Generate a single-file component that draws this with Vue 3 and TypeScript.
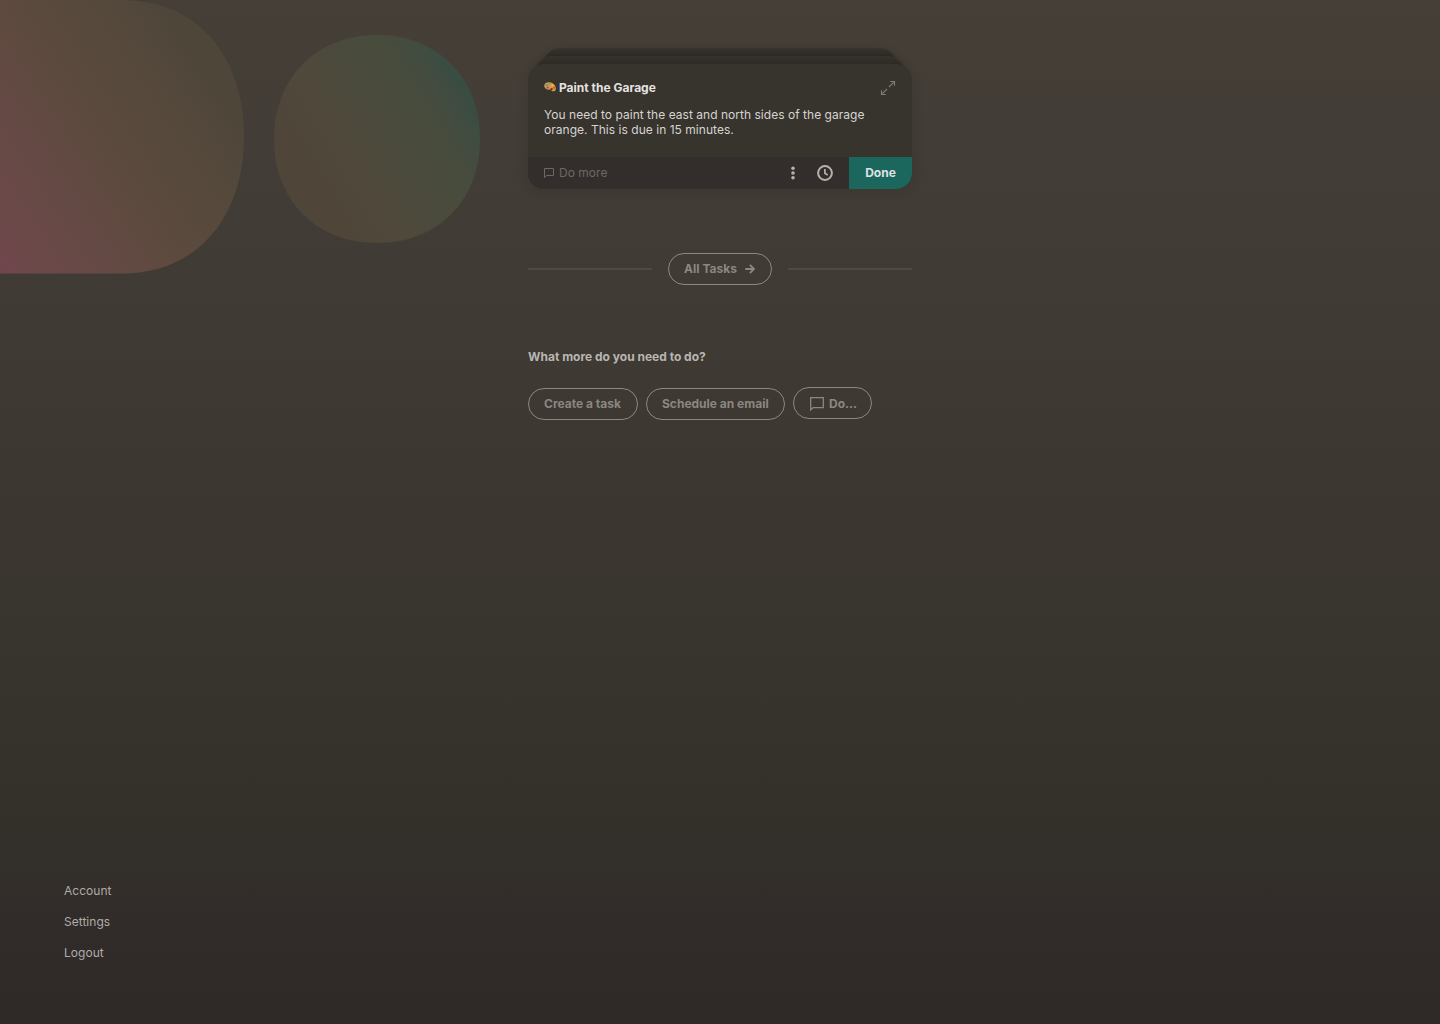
<script setup lang="ts">
interface Task {
  title: string
  body: string
}

const task: Task = {
  title: 'Paint the Garage',
  body: 'You need to paint the east and north sides of the garage orange. This is due in 15 minutes.',
}
const links: string[] = ['Account', 'Settings', 'Logout']
const suggestions: string[] = ['Create a task', 'Schedule an email']
</script>

<template>
  <div class="page">
    <svg class="blobs" width="500" height="280" viewBox="0 0 500 280" aria-hidden="true">
      <defs>
        <linearGradient id="warm" gradientUnits="userSpaceOnUse" x1="-10" y1="272" x2="232" y2="116">
          <stop offset="0" stop-color="#72464f" />
          <stop offset="0.12" stop-color="#6d484a" />
          <stop offset="0.5" stop-color="#5f4a40" />
          <stop offset="0.8" stop-color="#56493c" />
          <stop offset="1" stop-color="#4f463a" />
        </linearGradient>
        <linearGradient id="cool" gradientUnits="userSpaceOnUse" x1="300" y1="190" x2="472" y2="88">
          <stop offset="0" stop-color="#4f4539" />
          <stop offset="0.28" stop-color="#50483b" />
          <stop offset="0.45" stop-color="#4c4a3c" />
          <stop offset="0.74" stop-color="#474c3d" />
          <stop offset="0.87" stop-color="#424c41" />
          <stop offset="1" stop-color="#364d43" />
        </linearGradient>
      </defs>
      <path d="M0 0H122C199 0 244 58 244 136.500S199 273.500 122 273.500H0Z" fill="url(#warm)" />
      <path d="M377 35C438 35 480 78 480 139S438 243 377 243S274 200 274 139S316 35 377 35Z" fill="url(#cool)" />
    </svg>

    <main class="column">
      <div class="stack">
        <div class="layer layer-back"></div>
        <div class="layer layer-mid"></div>
        <article class="card">
          <div class="card-body">
            <header class="card-head">
              <span class="emoji">
                <svg width="12" height="10" viewBox="0 0 12 10">
                  <path d="M.2 3.800C.2 1.200 2.600.1 5.200.2C8.800.4 11.900 3 11.900 6.400C11.900 8.600 10.100 9.800 8.300 9.200C7.300 8.800 7.300 7.900 6.400 7.600C5.200 7.200 4.800 8.100 3.300 7.600C1.500 7 .2 5.500.2 3.800Z" fill="#dc9741" />
                  <ellipse cx="7.600" cy="7.100" rx="1.400" ry=".8" fill="#37332d" />
                  <circle cx="5.400" cy="1.700" r="1.100" fill="#6fae45" />
                  <circle cx="2.500" cy="2.900" r="1.200" fill="#36a5b5" />
                  <circle cx="3.700" cy="5.600" r="1.100" fill="#8b45a0" />
                  <circle cx="8.400" cy="3.300" r="1" fill="#e6c64b" />
                  <circle cx="10.200" cy="5.700" r=".9" fill="#c94635" />
                </svg>
              </span>
              <h2 class="title">{{ task.title }}</h2>
              <svg class="expand" width="16" height="16" viewBox="0 0 16 16" fill="none" stroke="#7d7974" stroke-width="1.200">
                <path d="M10.200 1.500h4.300v4.300M14.300 1.700L9 7M5.800 14.500H1.500v-4.300M1.700 14.300L7 9" />
              </svg>
            </header>
            <p class="text">{{ task.body }}</p>
          </div>
          <footer class="card-foot">
            <div class="more">
              <svg width="10" height="10" viewBox="0 0 10 10" fill="none" stroke="currentColor">
                <path d="M.5 9.500V.5h9v7H2.500Z" />
              </svg>
              <span>Do more</span>
            </div>
            <svg class="dots" width="4" height="14" viewBox="0 0 4 14" fill="#b5b2ae">
              <circle cx="2" cy="2.200" r="1.800" />
              <circle cx="2" cy="7" r="1.800" />
              <circle cx="2" cy="11.800" r="1.800" />
            </svg>
            <svg class="clock" width="16" height="16" viewBox="0 0 16 16" fill="none" stroke="#b5b2ae" stroke-width="2">
              <circle cx="8" cy="8" r="6.900" />
              <path d="M7.900 4v4.300l2.800 1.700" stroke-width="1.700" />
            </svg>
            <button class="done">Done</button>
          </footer>
        </article>
      </div>

      <div class="divider">
        <span class="rule"></span>
        <button class="pill all">
          <span>All Tasks</span>
          <svg width="10" height="10" viewBox="0 0 10 10" fill="none" stroke="currentColor" stroke-width="1.900">
            <path d="M.3 5H8.500M4.900 .9L9 5L4.900 9.100" />
          </svg>
        </button>
        <span class="rule"></span>
      </div>

      <h3 class="question">What more do you need to do?</h3>
      <div class="actions">
        <button v-for="s in suggestions" :key="s" class="pill suggestion">
          <span>{{ s }}</span>
        </button>
        <button class="pill do">
          <svg width="14" height="14" viewBox="0 0 14 14" fill="none" stroke="currentColor" stroke-width="1.300">
            <path d="M.7 13V.7h12.600v9.900H3.100Z" />
          </svg>
          Do...
        </button>
      </div>
    </main>

    <nav class="nav">
      <a v-for="l in links" :key="l">{{ l }}</a>
    </nav>
  </div>
</template>

<style>
body {
  margin: 0;
  background: #302b29;
}
</style>

<style scoped>
.page {
  position: relative;
  box-sizing: border-box;
  width: 1440px;
  height: 1024px;
  overflow: hidden;
  display: flex;
  flex-direction: column;
  justify-content: space-between;
  padding: 48px 0 64px;
  background: linear-gradient(180deg, #453f38 0%, #3e3933 38%, #35322b 75%, #312c29 90%, #2f2a28 100%);
  font: 400 12px/15px Inter, sans-serif;
  color: #d6d4d1;
}
.blobs {
  position: absolute;
  top: 0;
  left: 0;
}
.column {
  position: relative;
  width: 384px;
  margin: 0 auto;
}
.stack {
  display: flex;
  flex-direction: column;
  align-items: center;
}
.layer {
  height: 40px;
  margin-bottom: -32px;
  border-radius: 16px;
  background: linear-gradient(180deg, #37342e, #2f2c27 8px);
  box-shadow: 0 2px 8px rgba(30, 27, 22, 0.24);
}
.layer-back {
  width: 352px;
}
.layer-mid {
  width: 368px;
}
.card {
  position: relative;
  width: 384px;
  height: 125px;
  border-radius: 16px;
  overflow: hidden;
  background: #37332d;
  box-shadow: 0 2px 12px rgba(30, 27, 22, 0.16);
}
.card-body {
  box-sizing: border-box;
  height: 93px;
  padding: 16px;
}
.card-head {
  display: flex;
  align-items: center;
  height: 16px;
}
.emoji {
  display: flex;
  width: 15px;
  padding-bottom: 2px;
}
.title,
.question {
  margin: 0;
  font-size: 12px;
  line-height: 15px;
  font-weight: 700;
}
.title {
  padding-bottom: 2px;
  color: #e5e3e1;
}
.expand {
  margin-left: auto;
}
.text {
  margin: 11px 0 0;
  letter-spacing: 0.03px;
}
.card-foot {
  display: flex;
  align-items: center;
  height: 32px;
  padding-left: 16px;
  background: #332e2b;
}
.more {
  display: flex;
  align-items: center;
  gap: 5px;
  flex: 1;
  color: #6c6864;
  letter-spacing: 0.03px;
}
.more span,
.all span,
.suggestion span {
  padding-bottom: 2px;
}
.dots {
  margin-right: 22px;
}
.clock {
  margin-right: 16px;
}
button {
  font: 700 12px/15px Inter, sans-serif;
  padding: 0;
  margin: 0;
  border: 0;
  background: none;
}
.done {
  width: 63px;
  height: 32px;
  padding-bottom: 2px;
  background: #1b665d;
  color: #dbe3e0;
}
.divider {
  display: flex;
  align-items: center;
  gap: 16px;
  margin-top: 64px;
}
.rule {
  flex: 1;
  height: 2px;
  background: #4e4a44;
}
.pill {
  box-sizing: border-box;
  display: flex;
  align-items: center;
  justify-content: center;
  height: 32px;
  padding: 0 15px;
  border: 1px solid #8b8782;
  border-radius: 16px;
  color: #8b8782;
  white-space: nowrap;
}
.all {
  width: 104px;
  gap: 8px;
  padding: 0 15px 0 14px;
}
.question {
  margin-top: 64px;
  color: #b9b6b2;
}
.actions {
  display: flex;
  gap: 8px;
  margin-top: 24px;
}
.suggestion {
  justify-content: flex-start;
}
.suggestion:nth-child(1) {
  width: 110px;
}
.suggestion:nth-child(2) {
  width: 139px;
}
.do {
  width: 79px;
  justify-content: flex-start;
  gap: 5px;
  padding: 0 0 0 16px;
  margin-top: -1px;
}
.do svg {
  margin-top: 2px;
}
.nav {
  position: relative;
  display: flex;
  flex-direction: column;
  gap: 16px;
  padding-left: 64px;
  color: #aeaba8;
  letter-spacing: 0.03px;
}
</style>
